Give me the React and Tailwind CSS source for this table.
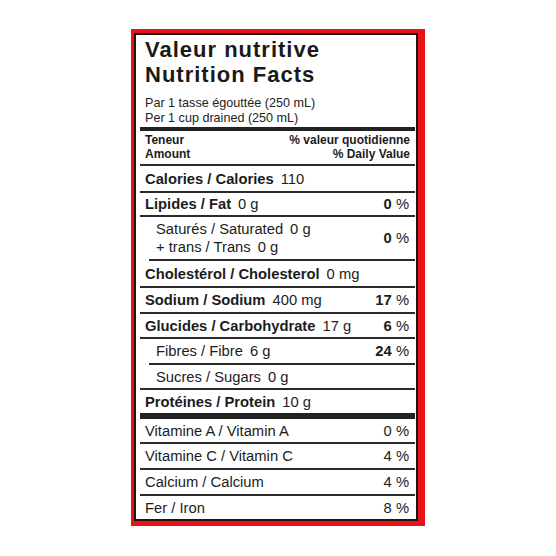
import React from "react";

function Rule({ indent }) {
  return <div className={indent ? "ml-[9px] h-[2px] bg-[#2b2b2b]" : "h-[2px] bg-[#2b2b2b]"} />;
}

function Pct({ n, bold }) {
  return (
    <span className="whitespace-pre">
      <span className={bold ? "font-bold" : ""}>{n}</span>
      <span> %</span>
    </span>
  );
}

function Row({ h, indent, children, pct }) {
  return (
    <div className={`flex items-center justify-between pr-[6px] ${h} ${indent ? "pl-[16px]" : "pl-[5px]"}`}>
      <div>{children}</div>
      {pct}
    </div>
  );
}

export default function App() {
  return (
    <div className="w-[556px] h-[556px] bg-white pt-[29px] pl-[131px] font-['Liberation_Sans',Arial,Helvetica,sans-serif] text-[#1c1c1c]">
      <div className="w-[294px] h-[497px] bg-[#e8121a] pl-[3px] pt-[4px] pr-[7px] pb-[5px]">
        <div className="h-full border-2 border-[#231414] bg-white pl-[4px] pr-[1px] flex flex-col">
          <div className="pl-[5px] pt-[2px] text-[22px] leading-[25px] font-bold tracking-[1px] text-[#1a1a1a]">
            <div>Valeur nutritive</div>
            <div>Nutrition Facts</div>
          </div>
          <div className="pl-[5px] mt-[9px] text-[12.6px] leading-[14.5px] text-[#222]">
            <div>Par 1 tasse égouttée (250 mL)</div>
            <div>Per 1 cup drained (250 mL)</div>
          </div>
          <div className="mt-[2px] h-[4px] bg-[#222]" />
          <div className="flex justify-between pl-[5px] pr-[5px] pt-[2px] pb-[3px] text-[12px] leading-[14px] font-bold">
            <div>
              <div>Teneur</div>
              <div>Amount</div>
            </div>
            <div className="text-right">
              <div>% valeur quotidienne</div>
              <div>% Daily Value</div>
            </div>
          </div>
          <Rule />
          <div className="text-[14.75px] leading-[18px]">
            <Row h="h-[25px]">
              <span className="font-bold">Calories / Calories</span>
              <span className="ml-[7px]">110</span>
            </Row>
            <Rule />
            <Row h="h-[22px]" pct={<Pct n="0" bold />}>
              <span className="font-bold">Lipides / Fat</span>
              <span className="ml-[7px]">0 g</span>
            </Row>
            <Rule />
            <Row h="h-[42px]" indent pct={<Pct n="0" bold />}>
              <div>
                Saturés / Saturated<span className="ml-[7px]">0 g</span>
              </div>
              <div>
                + trans / Trans<span className="ml-[7px]">0 g</span>
              </div>
            </Row>
            <Rule indent />
            <Row h="h-[25px]">
              <span className="font-bold">Cholestérol / Cholesterol</span>
              <span className="ml-[7px]">0 mg</span>
            </Row>
            <Rule />
            <Row h="h-[24px]" pct={<Pct n="17" bold />}>
              <span className="font-bold">Sodium / Sodium</span>
              <span className="ml-[7px]">400 mg</span>
            </Row>
            <Rule />
            <Row h="h-[23px]" pct={<Pct n="6" bold />}>
              <span className="font-bold">Glucides / Carbohydrate</span>
              <span className="ml-[7px]">17 g</span>
            </Row>
            <Rule />
            <Row h="h-[24px]" indent pct={<Pct n="24" bold />}>
              Fibres / Fibre<span className="ml-[7px]">6 g</span>
            </Row>
            <Rule indent />
            <Row h="h-[23px]" indent>
              Sucres / Sugars<span className="ml-[7px]">0 g</span>
            </Row>
            <Rule />
            <Row h="h-[23px]">
              <span className="font-bold">Protéines / Protein</span>
              <span className="ml-[7px]">10 g</span>
            </Row>
            <div className="h-[6px] bg-[#222]" />
            <Row h="h-[23px]" pct={<Pct n="0" />}>
              Vitamine A / Vitamin A
            </Row>
            <Rule />
            <Row h="h-[24px]" pct={<Pct n="4" />}>
              Vitamine C / Vitamin C
            </Row>
            <Rule />
            <Row h="h-[24px]" pct={<Pct n="4" />}>
              Calcium / Calcium
            </Row>
            <Rule />
            <Row h="h-[23px]" pct={<Pct n="8" />}>
              Fer / Iron
            </Row>
          </div>
        </div>
      </div>
    </div>
  );
}
